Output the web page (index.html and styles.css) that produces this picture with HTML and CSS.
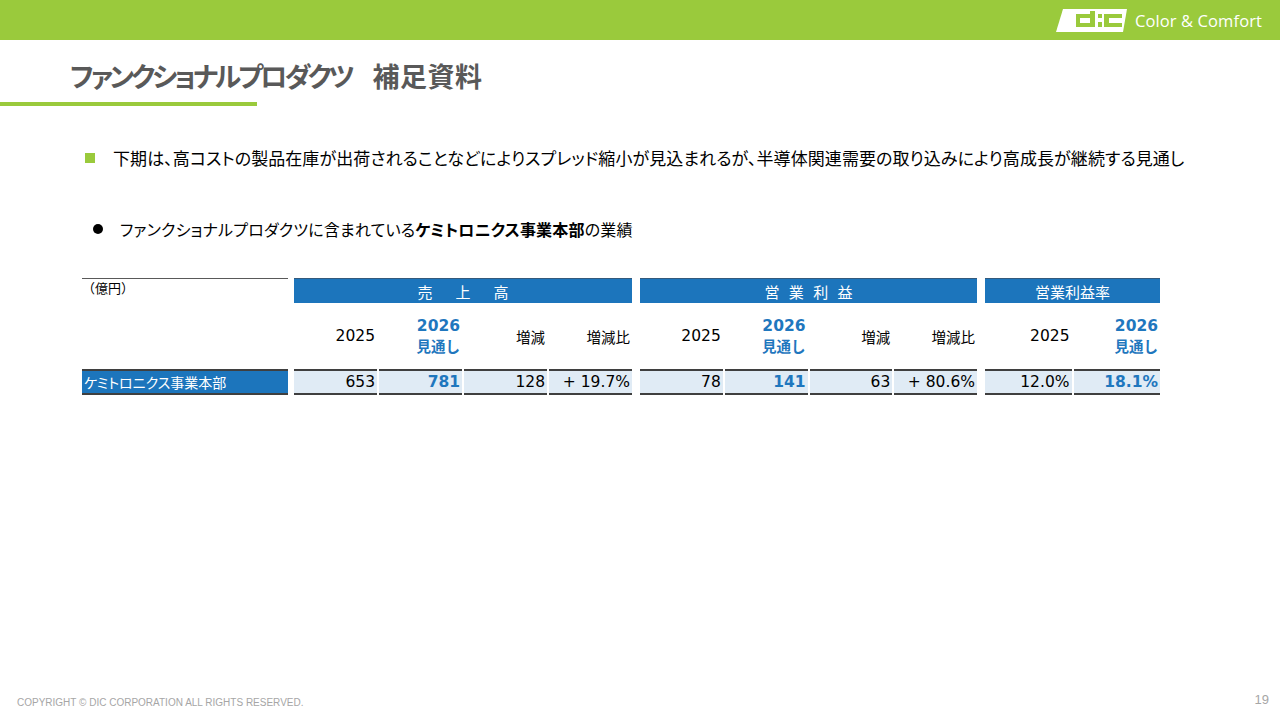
FILE: index.html
```html
<!DOCTYPE html>
<html lang="ja">
<head>
<meta charset="utf-8">
<title>ファンクショナルプロダクツ 補足資料</title>
<link rel="stylesheet" href="styles.css">
</head>
<body>
<div class="page">
  <header class="topbar">
    <div class="brand">
      <svg class="logo" width="74" height="26" viewBox="0 0 74 26" aria-label="DIC">
        <polygon points="8,1 72,1 68,24 1,24" fill="#fff"/>
        <rect x="21" y="6" width="19" height="13" fill="#9aca3c"/>
        <rect x="25" y="10" width="10" height="5" fill="#fff"/>
        <rect x="35" y="3" width="5" height="4" fill="#9aca3c"/>
        <rect x="43" y="6" width="4" height="4" fill="#9aca3c"/>
        <rect x="43" y="14" width="4" height="5" fill="#9aca3c"/>
        <rect x="49" y="6" width="18" height="13" fill="#9aca3c"/>
        <rect x="54" y="10" width="13" height="5" fill="#fff"/>
      </svg>
      <span class="brand-text">Color &amp; Comfort</span>
    </div>
  </header>

  <h1 class="title"><span class="kana">ファンクショナルプロダクツ</span><span class="title-gap"></span>補足資料</h1>
  <div class="title-rule"></div>

  <p class="lead"><span class="sq"></span>下期は、高コストの製品在庫が出荷されることなどによりスプレッド縮小が見込まれるが、半導体関連需要の取り込みにより高成長が継続する見通し</p>

  <p class="sub"><span class="dot"></span>ファンクショナルプロダクツに含まれている<b>ケミトロニクス事業本部</b>の業績</p>

  <div class="table">
    <div class="row head">
      <div class="lab unit">（億円）</div>
      <div class="grp g4 band"><span class="sp1">売　上　高</span></div>
      <div class="grp g4 band"><span class="sp2">営 業 利 益</span></div>
      <div class="grp g2 band">営業利益率</div>
    </div>
    <div class="row subhead">
      <div class="lab"></div>
      <div class="grp g4">
        <div class="c num">2025</div>
        <div class="c hl"><span>2026</span><span class="jp">見通し</span></div>
        <div class="c">増減</div>
        <div class="c">増減比</div>
      </div>
      <div class="grp g4">
        <div class="c num">2025</div>
        <div class="c hl"><span>2026</span><span class="jp">見通し</span></div>
        <div class="c">増減</div>
        <div class="c">増減比</div>
      </div>
      <div class="grp g2">
        <div class="c num">2025</div>
        <div class="c hl"><span>2026</span><span class="jp">見通し</span></div>
      </div>
    </div>
    <div class="row data">
      <div class="lab name">ケミトロニクス事業本部</div>
      <div class="grp g4">
        <div class="c">653</div>
        <div class="c strong">781</div>
        <div class="c">128</div>
        <div class="c">+ 19.7%</div>
      </div>
      <div class="grp g4">
        <div class="c">78</div>
        <div class="c strong">141</div>
        <div class="c">63</div>
        <div class="c">+ 80.6%</div>
      </div>
      <div class="grp g2">
        <div class="c">12.0%</div>
        <div class="c strong">18.1%</div>
      </div>
    </div>
  </div>

  <footer class="foot">
    <span class="copy">COPYRIGHT © DIC CORPORATION ALL RIGHTS RESERVED.</span>
    <span class="pno">19</span>
  </footer>
</div>
</body>
</html>
```

FILE: styles.css
```css
html, body {
  margin: 0;
  padding: 0;
  background: #fff;
}
.page {
  width: 1280px;
  height: 720px;
  display: flex;
  flex-direction: column;
  font-family: "Noto Sans CJK JP", "Noto Sans", sans-serif;
  color: #000;
  overflow: hidden;
}
.topbar {
  height: 40px;
  background: #9aca3c;
  display: flex;
  justify-content: flex-end;
  align-items: center;
  padding-right: 18px;
  flex: none;
}
.brand {
  display: flex;
  align-items: center;
  gap: 6px;
}
.logo { display: block; margin-top: 1px; }
.brand-text {
  color: #fff;
  font-family: "Open Sans", "Noto Sans", sans-serif;
  font-size: 16.5px;
  letter-spacing: 0.1px;
}
.title {
  margin: 18px 0 0 70px;
  font-size: 27px;
  line-height: 36px;
  font-weight: 700;
  color: #595959;
  font-feature-settings: "palt";
  letter-spacing: 0.5px;
}
.title .kana { letter-spacing: -3.1px; }
.title-gap { display: inline-block; width: 21px; }
.title-rule {
  margin-top: 8px;
  width: 257px;
  height: 4px;
  background: #9aca3c;
  flex: none;
}
.lead {
  margin: 39px 0 0 85px;
  font-size: 17px;
  line-height: 26px;
  display: flex;
  align-items: center;
  font-feature-settings: "palt";
  letter-spacing: 0.08px;
  white-space: nowrap;
}
.sq {
  width: 10px;
  height: 10px;
  background: #9aca3c;
  margin-right: 18px;
  flex: none;
}
.sub {
  margin: 46px 0 0 93px;
  font-size: 16px;
  line-height: 24px;
  display: flex;
  align-items: center;
  font-feature-settings: "palt";
  letter-spacing: 0.18px;
  white-space: nowrap;
}
.sub b { font-weight: 700; }
.dot {
  width: 10px;
  height: 10px;
  border-radius: 50%;
  background: #000;
  margin-right: 17px;
  flex: none;
}
.table {
  margin: 37px 0 0 82px;
  display: flex;
  flex-direction: column;
}
.row { display: flex; }
.lab { width: 206px; flex: none; }
.grp { display: flex; gap: 2px; flex: none; }
.grp.g4 { width: 338px; margin-left: 6px; }
.grp.g4 + .grp.g4 { width: 337px; margin-left: 8px; }
.grp.g2 { width: 175px; margin-left: 8px; }
.grp .c { flex: 1 1 0; min-width: 0; }

.head { height: 25px; }
.unit {
  border-top: 1px solid #595959;
  font-size: 13px;
  line-height: 18px;
  color: #000;
  box-sizing: border-box;
}
.band {
  background: #1c75bc;
  border-top: 1px solid #355a7c;
  box-sizing: border-box;
  color: #fff;
  font-size: 15px;
  display: flex;
  align-items: center;
  justify-content: center;
}
.sp1 { letter-spacing: 4px; margin-right: -4px; }
.sp2 { letter-spacing: 3px; margin-right: -3px; }

.subhead { height: 66px; }
.subhead .c {
  display: flex;
  flex-direction: column;
  align-items: flex-end;
  justify-content: center;
  padding-right: 2px;
  font-size: 14.5px;
}
.subhead .c.num {
  font-family: "DejaVu Sans", sans-serif;
  font-size: 15.5px;
}
.subhead .c.hl {
  color: #1f77be;
  font-weight: 700;
  line-height: 20px;
}
.subhead .c.hl span:first-child {
  font-family: "DejaVu Sans", sans-serif;
  font-size: 15.5px;
}
.subhead .c.hl .jp { font-size: 14.5px; }

.data { height: 26px; }
.data .lab, .data .c {
  border-top: 2px solid #3f3f3f;
  border-bottom: 2px solid #3f3f3f;
  box-sizing: border-box;
  display: flex;
  align-items: center;
}
.data .name {
  background: #1c75bc;
  color: #fff;
  font-size: 14px;
  padding-left: 2px;
  font-feature-settings: "palt";
}
.data .c {
  background: #e0ebf5;
  justify-content: flex-end;
  padding-right: 2px;
  font-family: "DejaVu Sans", sans-serif;
  font-size: 15.5px;
}
.data .c.strong { color: #1f77be; font-weight: 700; }

.foot {
  margin-top: auto;
  height: 30px;
  display: flex;
  justify-content: space-between;
  align-items: flex-start;
  padding: 0 11px 0 17px;
  font-family: "Liberation Sans", Arial, sans-serif;
  color: #a6a6a6;
}
.copy { font-size: 10px; padding-top: 7px; }
.pno { font-size: 13px; padding-top: 2px; }
```
